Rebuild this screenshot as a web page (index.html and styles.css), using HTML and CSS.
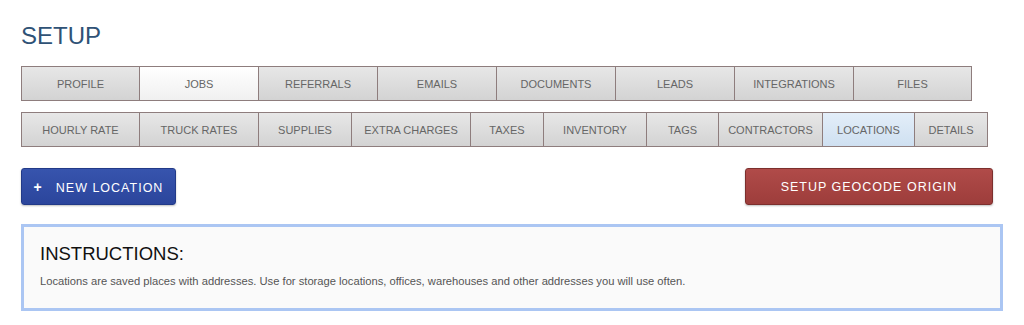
FILE: index.html
```html
<!DOCTYPE html>
<html lang="en">
<head>
  <meta charset="UTF-8">
  <meta name="viewport" content="width=device-width, initial-scale=1.0">
  <title>Setup - Locations</title>
  <link rel="stylesheet" href="styles.css">
</head>
<body>
  <div class="page">
    <h1 class="page-title">SETUP</h1>

    <div class="tabs tabs-main">
      <a class="tab">PROFILE</a>
      <a class="tab tab-current">JOBS</a>
      <a class="tab">REFERRALS</a>
      <a class="tab">EMAILS</a>
      <a class="tab">DOCUMENTS</a>
      <a class="tab">LEADS</a>
      <a class="tab">INTEGRATIONS</a>
      <a class="tab">FILES</a>
    </div>

    <div class="tabs tabs-sub">
      <a class="tab">HOURLY RATE</a>
      <a class="tab">TRUCK RATES</a>
      <a class="tab">SUPPLIES</a>
      <a class="tab">EXTRA CHARGES</a>
      <a class="tab">TAXES</a>
      <a class="tab">INVENTORY</a>
      <a class="tab">TAGS</a>
      <a class="tab">CONTRACTORS</a>
      <a class="tab tab-selected">LOCATIONS</a>
      <a class="tab">DETAILS</a>
    </div>

    <div class="actions">
      <button type="button" class="btn btn-blue"><span class="plus">+</span>NEW LOCATION</button>
      <button type="button" class="btn btn-red">SETUP GEOCODE ORIGIN</button>
    </div>

    <div class="instructions">
      <h3>INSTRUCTIONS:</h3>
      <p>Locations are saved places with addresses. Use for storage locations, offices, warehouses and other addresses you will use often.</p>
    </div>
  </div>
</body>
</html>
```

FILE: styles.css
```css
body { margin: 0; font-family: "Liberation Sans", Arial, sans-serif; background: #fff; }
.page { padding: 22px 0 0 21px; width: 982px; }

.page-title { margin: 0 0 16px; font-size: 24px; line-height: 28px; font-weight: normal; color: #2f5276; }

.tabs { display: flex; }
.tabs-main { margin-bottom: 11px; }
.tab {
  box-sizing: border-box; height: 35px; width: 120px; margin-left: -1px;
  display: flex; align-items: center; justify-content: center;
  font-size: 11px; color: #666; white-space: nowrap;
  border: 1px solid #8e7d7d;
  background: linear-gradient(#e7e7e7, #d3d3d3);
}
.tab:first-child { margin-left: 0; }
.tabs-main .tab:first-child, .tabs-main .tab:last-child { width: 119px; }
.tab-current { background: linear-gradient(#ffffff, #f0f0f0); }
.tab-selected { background: linear-gradient(#e3eef9, #cfe0f1); }

.tabs-sub .tab:nth-child(1) { width: 119px; }
.tabs-sub .tab:nth-child(2) { width: 120px; }
.tabs-sub .tab:nth-child(3) { width: 94px; }
.tabs-sub .tab:nth-child(4) { width: 120px; }
.tabs-sub .tab:nth-child(5) { width: 74px; }
.tabs-sub .tab:nth-child(6) { width: 104px; }
.tabs-sub .tab:nth-child(7) { width: 73px; }
.tabs-sub .tab:nth-child(8) { width: 105px; }
.tabs-sub .tab:nth-child(9) { width: 93px; }
.tabs-sub .tab:nth-child(10) { width: 74px; }

.actions { display: flex; justify-content: space-between; margin-top: 21px; padding-right: 10px; }
.btn {
  height: 37px; padding: 0; border-radius: 3px; color: #fff;
  font-family: "Liberation Sans", Arial, sans-serif; font-size: 12.5px; letter-spacing: 1px;
  box-shadow: 0 1px 2px rgba(0,0,0,0.25);
}
.btn-blue { width: 155px; background: linear-gradient(#3754ad, #2b459c); border: 1px solid #223a88; }
.btn-red { width: 248px; background: linear-gradient(#b04b49, #9d3d3b); border: 1px solid #7c2f2d; }
.plus { font-weight: bold; margin-right: 13px; font-size: 14px; }

.instructions {
  margin-top: 19px; height: 87px; box-sizing: border-box;
  border: 3px solid #abc6f3; background: #fafafa; padding: 0 16px;
}
.instructions h3 { margin: 16px 0 0; font-size: 18.5px; line-height: 22px; font-weight: normal; color: #111; }
.instructions p { margin: 9px 0 0; font-size: 11.2px; line-height: 14px; color: #555; }
```
